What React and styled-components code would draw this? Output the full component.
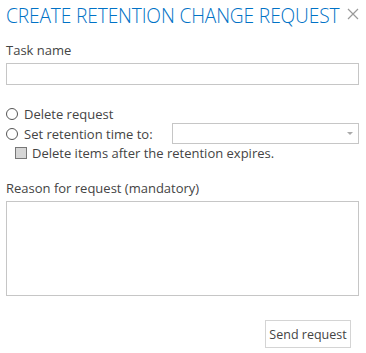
import React from "react";
import styled, { createGlobalStyle } from "styled-components";

const Global = createGlobalStyle`
  html, body { margin: 0; padding: 0; background: #fff; }
  body { font-family: "Open Sans", "Noto Sans", sans-serif; color: #444; }
  * { box-sizing: border-box; }
`;

const Dialog = styled.div`
  width: 366px;
  height: 353px;
  padding: 3px 7px 0 6px;
  display: flex;
  flex-direction: column;
`;

const Header = styled.div`
  display: flex;
  align-items: flex-start;
  justify-content: space-between;
`;

const Title = styled.h1`
  margin: 0;
  font-weight: 300;
  font-size: 19.2px;
  line-height: 26px;
  color: #0072c6;
  letter-spacing: -0.15px;
  white-space: nowrap;
`;

const Close = styled.button`
  border: 0;
  background: none;
  padding: 0;
  margin: 5px 0 0 0;
  width: 12px;
  height: 12px;
  display: flex;
  cursor: pointer;
`;

const Label = styled.div`
  font-size: 13px;
  line-height: 17px;
  color: #444;
  margin-top: ${p => p.$mt || 0}px;
`;

const TextInput = styled.div`
  margin-top: ${p => p.$mt || 0}px;
  height: ${p => p.$h}px;
  border: 1px solid #c6c6c6;
  background: #fff;
`;

const Options = styled.div`
  margin-top: 19px;
  display: flex;
  flex-direction: column;
`;

const RadioRow = styled.label`
  display: flex;
  align-items: center;
  height: ${p => p.$h || 19}px;
  font-size: 13px;
  color: #444;
  gap: 6px;
`;

const Circle = styled.span`
  width: 12px;
  height: 12px;
  border: 1px solid #555;
  border-radius: 50%;
  flex: none;
`;

const Spacer = styled.span`
  flex: 1;
`;

const Select = styled.div`
  width: 187px;
  height: 21px;
  border: 1px solid #c6c6c6;
  display: flex;
  align-items: center;
  justify-content: flex-end;
  padding-right: 5px;
`;

const Caret = styled.span`
  width: 0;
  height: 0;
  border-left: 3px solid transparent;
  border-right: 3px solid transparent;
  border-top: 3px solid #aaa;
`;

const CheckRow = styled.label`
  display: flex;
  align-items: center;
  gap: 5px;
  margin-left: 9px;
  height: 18px;
  font-size: 13px;
  color: #444;
`;

const Box = styled.span`
  width: 12px;
  height: 12px;
  border: 1px solid #777;
  background: #d6d6d6;
  flex: none;
`;

const Footer = styled.div`
  display: flex;
  justify-content: flex-end;
  margin-top: 24px;
  padding-right: 8px;
`;

const Button = styled.button`
  font-family: inherit;
  font-size: 12.5px;
  color: #444;
  background: #fff;
  border: 1px solid #d4d4d4;
  height: 28px;
  width: 86px;
  padding: 0;
  cursor: pointer;
`;

export default function App() {
  return (
    <>
      <Global />
      <Dialog>
        <Header>
          <Title>CREATE RETENTION CHANGE REQUEST</Title>
          <Close aria-label="Close">
            <svg width="12" height="12" viewBox="0 0 12 12">
              <path d="M1 1 L11 11 M11 1 L1 11" stroke="#9a9a9a" strokeWidth="1.2" fill="none" />
            </svg>
          </Close>
        </Header>
        <Label $mt={13}>Task name</Label>
        <TextInput $mt={4} $h={22} />
        <Options>
          <RadioRow>
            <Circle />
            Delete request
          </RadioRow>
          <RadioRow $h={21}>
            <Circle />
            Set retention time to:
            <Spacer />
            <Select>
              <Caret />
            </Select>
          </RadioRow>
          <CheckRow>
            <Box />
            Delete items after the retention expires.
          </CheckRow>
        </Options>
        <Label $mt={18}>Reason for request (mandatory)</Label>
        <TextInput $mt={4} $h={95} />
        <Footer>
          <Button>Send request</Button>
        </Footer>
      </Dialog>
    </>
  );
}
